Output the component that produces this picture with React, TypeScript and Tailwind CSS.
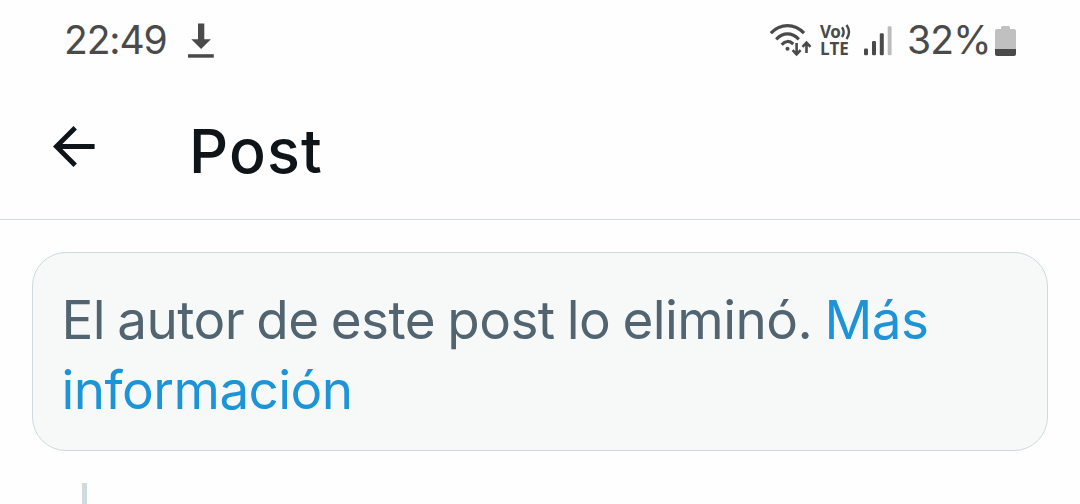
function DownloadIcon() {
  return (
    <svg width="26" height="36" viewBox="0 0 26 36" fill="#4a4a4a" className="shrink-0">
      <path d="M10 .5h6.300v15.700h6.600L13.100 26 3.300 16.200h6.700z" />
      <path d="M0 31.200h25.800v3.500H0z" />
    </svg>
  );
}

function WifiIcon() {
  return (
    <svg width="42" height="34" viewBox="0 0 42 34" fill="none" stroke="#4a4a4a" strokeWidth="3.200" className="shrink-0">
      <path d="M.8 10.200C10.500 .200 24.500 .200 34 10.200" />
      <path d="M6.200 16.300C13 9 22 9 28.800 16.300" />
      <path d="M11.700 21.800C15.500 17.500 19.500 17.500 23.300 21" />
      <circle cx="17.500" cy="25.800" r="2" fill="#4a4a4a" stroke="none" />
      <path d="M26.600 20v11M22.600 27.200l4 4.100 4-4.100M36.500 30V20M32.500 23.800l4-4.200 4 4.200" strokeWidth="2.600" />
    </svg>
  );
}

function VolteIcon() {
  return (
    <div className="flex h-[36px] w-[32px] flex-col pt-px font-['Open_Sans',sans-serif] text-[17px] leading-[17px] font-bold whitespace-nowrap">
      <span className="flex h-[17px] items-start">
        <span className="w-[21px] tracking-[-0.9px]">Vo</span>
        <svg width="11" height="18" viewBox="0 0 11 18" fill="none" stroke="#4a4a4a" strokeWidth="2.400" className="shrink-0">
          <path d="M1 4.200q3.400 4.800 0 9.800M5.500 2q5 7 0 14" />
        </svg>
      </span>
      <span className="tracking-[-0.1px]">LTE</span>
    </div>
  );
}

function SignalIcon() {
  return (
    <svg width="28" height="31" viewBox="0 0 28 31" fill="#4a4a4a" className="shrink-0">
      <rect x="0" y="22.500" width="4" height="6.800" rx="1.200" />
      <rect x="8" y="15" width="4" height="14.300" rx="1.200" />
      <rect x="15.800" y="7.300" width="4" height="22" rx="1.200" />
      <rect x="23.700" y="0.300" width="3.900" height="29" rx="1.200" fill="#bcbcbc" />
    </svg>
  );
}

function BatteryIcon() {
  return (
    <svg width="22" height="31" viewBox="0 0 22 31" className="shrink-0">
      <path d="M7.500 0h6q1.500 0 1.500 1.500V3h4q2 0 2 2v18H0V5q0-2 2-2h4V1.500Q6 0 7.500 0z" fill="#c0c0c0" />
      <path d="M0 23h21v5q0 2-2 2H2q-2 0-2-2z" fill="#4a4a4a" />
    </svg>
  );
}

export default function App() {
  return (
    <div className="flex h-[504px] w-[1080px] flex-col overflow-hidden bg-[#fefefe] font-['Inter',sans-serif]">
      <div className="flex h-20 shrink-0 items-start justify-between pr-[63px] pl-[64px] text-[#4a4a4a]">
        <div className="flex items-start">
          <span className="mt-[20px] w-[124px] text-[39px] leading-[40px] font-normal tracking-[-1.100px] whitespace-nowrap">22:49</span>
          <span className="mt-[23px]"><DownloadIcon /></span>
        </div>
        <div className="flex items-start">
          <span className="mt-[23px] w-[50px]"><WifiIcon /></span>
          <span className="mt-[22px] w-[44px]"><VolteIcon /></span>
          <span className="mt-[26px] w-[43px]"><SignalIcon /></span>
          <span className="mt-[20px] w-[88px] text-[39px] leading-[40px] font-normal tracking-[-0.800px] whitespace-nowrap">32%</span>
          <span className="mt-[26px]"><BatteryIcon /></span>
        </div>
      </div>
      <header className="flex h-[140px] shrink-0 items-start border-b border-[#d3dadd] pl-[53px] text-[#0f1419]">
        <svg width="43" height="42" viewBox="0 0 43 42" fill="none" stroke="#0f1419" strokeWidth="4.800" className="mt-[46px] shrink-0">
          <path d="M41.600 20.500H3.500M22.200 1.700L3.400 20.500l18.800 18.800" />
        </svg>
        <h1 className="mt-[35px] ml-[93px] text-[61px] leading-[72px] font-medium tracking-[1.200px]">Post</h1>
      </header>
      <main className="px-8 pt-8">
        <div className="h-[199px] rounded-[34px] border border-[#cfd9de] bg-[#f7f9f9] pt-[32px] pl-[28.5px]">
          <p className="text-[53px] leading-[70px] tracking-[-0.55px] text-[#536471] [word-spacing:-2.200px]">
            <span className="whitespace-nowrap">El autor de este post lo eliminó. <a className="text-[#1d93d8]">Más</a></span>
            <br />
            <a className="text-[#1d93d8]">información</a>
          </p>
        </div>
        <div className="mt-8 ml-[50px] h-[21px] w-[5px] bg-[#cfd9de]" />
      </main>
    </div>
  );
}
